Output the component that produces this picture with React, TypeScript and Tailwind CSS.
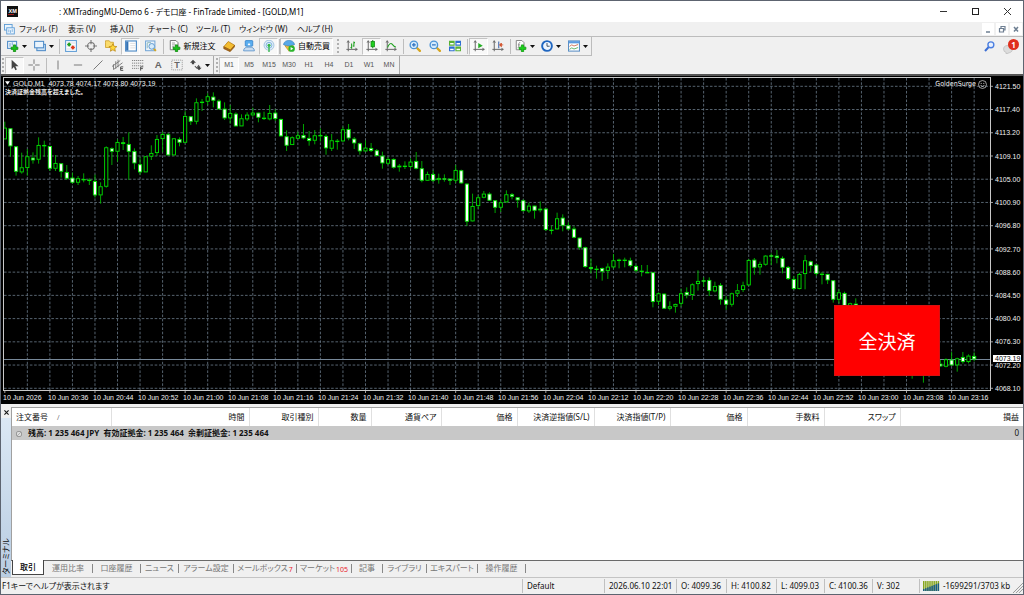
import type { ReactNode } from "react";
import clsx from "clsx";

/* ---------- chart data ---------- */

// [high, body top, body bottom, low, falling]; three units per pixel, measured from y = 75
const CANDLES: number[][] = [
  [140, 158, 193, 193, 0], [160, 160, 214, 245, 1], [214, 214, 290, 302, 1], [233, 277, 292, 296, 0],
  [222, 244, 279, 302, 0], [232, 248, 256, 266, 1], [187, 210, 254, 266, 0], [197, 210, 213, 245, 1],
  [213, 213, 281, 288, 1], [240, 264, 281, 288, 0], [265, 265, 290, 308, 1], [270, 291, 311, 315, 1],
  [293, 308, 323, 326, 1], [303, 310, 323, 330, 0], [295, 312, 315, 322, 1], [310, 314, 318, 330, 1],
  [299, 318, 361, 368, 1], [322, 334, 361, 386, 0], [214, 217, 335, 338, 0], [217, 220, 230, 270, 1],
  [193, 201, 230, 260, 0], [186, 202, 207, 225, 1], [172, 207, 230, 315, 1], [220, 228, 265, 283, 1],
  [247, 268, 292, 300, 1], [243, 244, 292, 292, 0], [211, 234, 245, 255, 0], [180, 192, 234, 243, 0],
  [170, 177, 192, 232, 0], [174, 178, 241, 242, 1], [190, 190, 241, 241, 0], [187, 192, 203, 214, 1],
  [108, 123, 203, 205, 0], [123, 124, 140, 150, 1], [70, 82, 140, 148, 0], [72, 80, 84, 108, 1],
  [55, 64, 80, 90, 0], [52, 65, 77, 97, 1], [73, 77, 103, 103, 1], [82, 101, 130, 135, 1],
  [90, 114, 130, 145, 0], [112, 116, 154, 155, 1], [118, 130, 154, 154, 0], [112, 119, 133, 138, 0],
  [98, 113, 121, 125, 0], [112, 113, 128, 142, 1], [110, 128, 132, 135, 1], [90, 114, 133, 136, 0],
  [103, 113, 132, 138, 1], [131, 132, 184, 185, 1], [166, 184, 212, 228, 1], [184, 187, 210, 210, 0],
  [170, 181, 191, 193, 0], [147, 180, 190, 193, 1], [168, 189, 198, 212, 1], [165, 181, 197, 208, 0],
  [160, 180, 184, 200, 1], [178, 183, 220, 239, 1], [177, 196, 221, 228, 0], [192, 197, 201, 224, 1],
  [155, 163, 199, 201, 0], [147, 162, 190, 196, 1], [186, 191, 205, 222, 1], [203, 205, 229, 239, 1],
  [196, 218, 229, 230, 0], [204, 219, 228, 231, 1], [222, 226, 243, 244, 1], [230, 242, 265, 281, 1],
  [246, 252, 266, 270, 0], [250, 252, 278, 281, 1], [267, 272, 277, 290, 0], [259, 272, 275, 282, 1],
  [250, 260, 276, 280, 0], [231, 258, 281, 283, 1], [258, 280, 317, 322, 1], [290, 297, 317, 318, 0],
  [286, 297, 317, 321, 1], [296, 309, 315, 326, 0], [298, 310, 313, 320, 1], [310, 311, 317, 330, 1],
  [270, 285, 317, 324, 0], [284, 286, 325, 327, 1], [324, 326, 440, 453, 1], [356, 393, 439, 440, 0],
  [361, 367, 393, 402, 0], [348, 356, 368, 370, 0], [352, 356, 377, 378, 1], [375, 376, 398, 414, 1],
  [375, 382, 398, 411, 0], [346, 358, 382, 383, 0], [354, 358, 365, 373, 1], [366, 367, 376, 398, 1],
  [373, 376, 408, 410, 1], [383, 392, 409, 414, 0], [391, 392, 407, 431, 1], [379, 401, 406, 412, 0],
  [399, 401, 465, 468, 1], [452, 464, 467, 478, 1], [413, 430, 463, 464, 0], [418, 428, 452, 469, 1],
  [442, 451, 463, 466, 1], [454, 461, 488, 490, 1], [487, 488, 518, 525, 1], [515, 517, 576, 578, 1],
  [551, 576, 582, 595, 1], [572, 581, 584, 611, 1], [578, 579, 590, 617, 1], [565, 575, 588, 612, 0],
  [537, 556, 577, 581, 0], [551, 554, 557, 580, 1], [548, 554, 557, 577, 1], [548, 556, 573, 577, 1],
  [569, 573, 587, 593, 1], [570, 587, 590, 604, 1], [570, 591, 593, 594, 1], [591, 592, 681, 697, 1],
  [652, 655, 680, 690, 0], [655, 656, 701, 702, 1], [679, 694, 701, 706, 0], [686, 687, 695, 713, 0],
  [641, 655, 686, 695, 0], [637, 651, 661, 670, 1], [625, 628, 660, 675, 0], [586, 618, 627, 647, 0],
  [607, 616, 619, 635, 1], [607, 615, 648, 663, 1], [620, 633, 649, 652, 0], [624, 630, 674, 689, 1],
  [663, 674, 689, 705, 1], [653, 655, 689, 695, 0], [627, 646, 656, 666, 0], [620, 631, 645, 651, 0],
  [552, 555, 631, 632, 0], [549, 554, 578, 599, 1], [560, 567, 577, 599, 0], [540, 542, 569, 572, 0],
  [535, 541, 544, 570, 1], [525, 542, 549, 565, 1], [544, 549, 578, 595, 1], [573, 576, 612, 615, 1],
  [603, 612, 642, 644, 1], [593, 597, 642, 643, 0], [540, 556, 597, 643, 0], [557, 559, 573, 591, 1],
  [567, 569, 597, 603, 1], [591, 596, 599, 628, 1], [596, 597, 616, 627, 1], [615, 616, 674, 683, 1],
  [643, 652, 674, 685, 0], [650, 654, 700, 705, 1], [683, 685, 697, 700, 0], [670, 686, 700, 710, 1],
  [690, 700, 730, 740, 1], [720, 730, 760, 770, 1], [745, 760, 780, 790, 1], [760, 770, 780, 795, 0],
  [765, 770, 800, 810, 1], [795, 800, 830, 840, 1], [810, 815, 830, 845, 0], [812, 815, 850, 860, 1],
  [840, 850, 870, 880, 1], [860, 870, 890, 911, 1], [865, 875, 890, 900, 0], [870, 875, 895, 923, 1],
  [860, 870, 895, 900, 0], [855, 862, 870, 890, 0], [855, 866, 874, 876, 1], [850, 853, 875, 877, 0],
  [831, 854, 871, 873, 1], [848, 850, 871, 890, 0], [831, 846, 861, 866, 1], [838, 842, 861, 865, 0],
  [832, 843, 853, 859, 1],
];

const STEP = 5.63;
const FIRST = 4.8;
const toY = (units: number) => 75 + units / 3;

const PRICES = [
  "4121.50", "4117.40", "4113.20", "4109.10", "4105.00", "4100.90", "4096.80",
  "4092.70", "4088.60", "4084.50", "4080.40", "4076.30", "4072.20", "4068.10",
];

const TIMES = [
  "2026", "20:36", "20:44", "20:52", "21:00", "21:08", "21:16", "21:24", "21:32", "21:40", "21:48",
  "21:56", "22:04", "22:12", "22:20", "22:28", "22:36", "22:44", "22:52", "23:00", "23:08", "23:16",
];

function Plot() {
  return (
    <svg viewBox="3 76 989 318" preserveAspectRatio="none" className="block h-[318px] w-full" role="img" aria-label="GOLD,M1">
      <g stroke="#6c7c8c" strokeWidth="0.8" strokeDasharray="2.6 1.7">
        {PRICES.map((p, k) => (
          <line key={p} x1="4" x2="989" y1={86.3 + 23.23 * k} y2={86.3 + 23.23 * k} />
        ))}
        {Array.from({ length: 43 }, (_, k) => {
          const x = FIRST + STEP * 4 * (k + 1);
          return <line key={k} x1={x} x2={x} y1="78" y2="390" />;
        })}
      </g>
      <line x1="4" x2="990" y1="359.5" y2="359.5" stroke="#778899" />
      {CANDLES.map(([high, top, bottom, low, falling], i) => {
        const x = FIRST + STEP * i;
        const y = toY(top) + 0.4;
        const h = Math.max(toY(bottom) - toY(top) - 0.8, 0.5);
        return (
          <g key={i} stroke="#00e400" strokeWidth="0.9">
            <line x1={x} x2={x} y1={toY(high)} y2={toY(top)} stroke="#00b800" />
            <line x1={x} x2={x} y1={toY(bottom)} y2={toY(low)} stroke="#00b800" />
            <rect x={x - 1.6} y={y} width="3.2" height={h} fill={falling ? "#ffffff" : "#000000"} />
          </g>
        );
      })}
      <path d="M3.5 391 V77.5 H989.5 V390.5 H3.5" fill="none" stroke="#c8c8c8" />
      <g stroke="#c8c8c8" strokeWidth="0.8">
        {PRICES.map((p, k) => (
          <line key={p} x1="990" x2="992" y1={86.3 + 23.23 * k} y2={86.3 + 23.23 * k} />
        ))}
        {TIMES.map((t, k) => (
          <line key={t} x1={FIRST + STEP * 8 * k} x2={FIRST + STEP * 8 * k} y1="391" y2="393" />
        ))}
      </g>
    </svg>
  );
}

function Chart() {
  return (
    <section className="relative flex h-[330px] shrink-0 border-t-2 border-[#555] bg-black pl-[2px] font-['Liberation_Sans',sans-serif] text-[7px] leading-[7px] text-[#f0f0f0]">
      <div className="min-w-0 flex-1">
        <Plot />
        <div className="grid grid-cols-22">
          {TIMES.map((t) => (
            <span key={t} className="whitespace-nowrap">10 Jun {t}</span>
          ))}
        </div>
      </div>
      <div className="relative flex w-[30px] flex-col justify-between pt-[7px] pb-[12px] pl-[2px]">
        {PRICES.map((p) => (
          <span key={p}>{p}</span>
        ))}
        <span className="absolute top-[279px] left-0 w-[28px] bg-white pl-[2px] text-black">4073.19</span>
      </div>
      <div className="absolute top-[4px] left-[4px]">
        <p className="whitespace-pre"><svg viewBox="0 0 6 4" className="mr-[3px] inline-block h-[4px] w-[5px] align-[1px]"><path d="M0 0h6L3 4z" fill="#fff" /></svg>GOLD,M1  4073.78 4074.17 4073.80 4073.19</p>
        <p className="mt-px font-['Noto_Sans_CJK_JP',sans-serif] text-[6px] leading-[8px] font-bold">決済証拠金残高を超えました。</p>
      </div>
      <div className="absolute top-[4px] right-[36px] flex items-center gap-[2px] font-['DejaVu_Sans_Condensed','DejaVu_Sans',sans-serif]">
        GoldenSurge
        <svg viewBox="0 0 10 10" className="h-[9px] w-[9px]" fill="none" stroke="#ddd">
          <circle cx="5" cy="5" r="4.4" strokeWidth="0.8" />
          <path d="M3 3.8h1.2M5.8 3.8H7M2.8 6q2.2 2.4 4.4 0" strokeWidth="0.9" />
        </svg>
      </div>
      <button className="absolute top-[229px] right-[83px] h-[71px] w-[106px] border border-[#d81010] bg-[#ff0000] font-['Noto_Sans_CJK_JP',sans-serif] text-[19px] leading-[19px] text-white">
        全決済
      </button>
    </section>
  );
}

/* ---------- icons ---------- */

const Svg = ({ children, className }: { children: ReactNode; className?: string }) => (
  <svg viewBox="0 0 16 16" className={clsx("shrink-0", className ?? "h-[12px] w-[12px]")} fill="none" aria-hidden="true">
    {children}
  </svg>
);

const PLUS = "M8.5 6.5h3v3h3v3h-3v3h-3v-3h-3v-3h3z";
const Axes = () => <path d="M3 1v14M0.5 12.5H15M1.5 3.5 3 1l1.5 2.5M12.5 11l2.5 1.5-2.5 1.5" stroke="#666" strokeWidth="1.3" />;
const Lens = ({ plus }: { plus?: boolean }) => (
  <>
    <path d="m10 10 4.5 4.5" stroke="#d6a520" strokeWidth="3" strokeLinecap="round" />
    <circle cx="6.5" cy="6.5" r="5" fill="#d5ebfb" stroke="#4b93d6" strokeWidth="1.8" />
    <path d={plus ? "M6.5 4v5M4 6.5h5" : "M4 6.5h5"} stroke="#2a6fc0" strokeWidth="1.6" />
  </>
);

const icons = {
  newChart: (
    <>
      <rect x="0.8" y="1.8" width="12" height="9.4" fill="#eaf4fd" stroke="#4f8cc8" strokeWidth="1.4" />
      <path d="M4 4v5M7 3v4" stroke="#4f8cc8" />
      <path d={PLUS} fill="#19c219" stroke="#0d850d" />
    </>
  ),
  profiles: (
    <>
      <rect x="3.8" y="5.8" width="11.4" height="8.4" fill="#cfe3f5" stroke="#4f8cc8" strokeWidth="1.4" />
      <rect x="0.8" y="1.8" width="12" height="8.6" fill="#eaf4fd" stroke="#4f8cc8" strokeWidth="1.4" />
    </>
  ),
  market: (
    <>
      <rect x="0.8" y="0.8" width="14.4" height="14.4" fill="#fff" stroke="#5b9bd5" strokeWidth="1.4" />
      <path d="M2 4h12M2 8h12M2 12h12" stroke="#ccd" />
      <path d="m5.5 3 3 3-3 3-3-3z" fill="#1fa01f" />
      <path d="m10.5 7 3 3-3 3-3-3z" fill="#e03818" />
    </>
  ),
  crosshair: (
    <>
      <circle cx="8" cy="8" r="4.6" stroke="#777" strokeWidth="1.5" />
      <path d="M8 0v5.5M8 10.5V16M0 8h5.5M10.5 8H16" stroke="#777" strokeWidth="1.5" />
    </>
  ),
  navigator: (
    <>
      <path d="M0.7 3V1h5l1.5 2h4v7H0.7z" fill="#fbdc6c" stroke="#c99a20" />
      <path d="m10.500 5 1.600 3.400 3.700.4-2.800 2.500.8 3.700-3.300-1.900L7.200 15l.8-3.700L5.200 8.800l3.700-.4z" fill="#ffd83c" stroke="#b98512" />
    </>
  ),
  terminal: (
    <>
      <rect x="0.8" y="1.3" width="14.4" height="13.4" fill="#fff" stroke="#4f8cc8" strokeWidth="1.5" />
      <path d="M3 2v12" stroke="#3573b5" strokeWidth="3" />
      <path d="M7 4.5h7M7 7.5h7M7 10.5h7" stroke="#d5d5d5" />
    </>
  ),
  tester: (
    <>
      <rect x="0.8" y="1.3" width="12.4" height="13" fill="#edf4fb" stroke="#6ba1d4" strokeWidth="1.3" />
      <path d="M3 4v7M3 3.5h5" stroke="#7aa" />
      <path d="m11.5 11.5 3 3" stroke="#d6a520" strokeWidth="2.5" />
      <circle cx="9" cy="8.5" r="3.8" fill="#d5ebfb" stroke="#5f98d0" strokeWidth="1.3" />
    </>
  ),
  order: (
    <>
      <path d="M1.7.7h7.5L12 3.5V13H1.7z" fill="#fff" stroke="#777" strokeWidth="1.3" />
      <path d="M4 4h4M4 6.5h5M4 9h3" stroke="#888" />
      <path d={PLUS} fill="#19c219" stroke="#0d850d" />
    </>
  ),
  book: (
    <>
      <path d="m1 9 6-7 8.5 5-5.5 6.5z" fill="#f4bd32" stroke="#b47a10" />
      <path d="M1 9v2.5l8.5 4 6-6.5V7L10 13.5z" fill="#a8681a" stroke="#8a520c" strokeWidth="0.8" />
    </>
  ),
  person: (
    <>
      <rect x="3" y="0.8" width="10" height="7.4" rx="1" fill="#5aaef0" stroke="#2d7ec8" />
      <path d="M6 7l2-3.500L10 7" fill="#fff" />
      <path d="M0.8 14.5c0-4 2.7-5 7.2-5s7.2 1 7.2 5z" fill="#c9dcf0" stroke="#4f8cc8" />
    </>
  ),
  signal: (
    <>
      <circle cx="8" cy="7" r="6.6" fill="#e4f0fa" stroke="#a9c8e2" strokeWidth="1.4" />
      <circle cx="8" cy="7" r="3.9" stroke="#7fb4e0" strokeWidth="1.3" />
      <circle cx="8" cy="7" r="2" fill="#34b54a" />
      <path d="M8 7v9" stroke="#34b54a" strokeWidth="1.8" />
    </>
  ),
  auto: (
    <>
      <path d="M0.5 6c1-4 4-5.500 7.500-5.500S14.500 2 15.500 6c-3 2.500-12 2.500-15 0z" fill="#58a9e8" stroke="#2b78b8" strokeWidth="0.8" />
      <path d="M2.5 7.5 8 15l5.500-7.500c-3 1.500-8 1.500-11 0z" fill="#f1c13a" stroke="#b98512" strokeWidth="0.8" />
      <circle cx="11.5" cy="11.5" r="4.3" fill="#2bb52b" />
      <path d="m10.2 9.2 3.6 2.3-3.6 2.3z" fill="#fff" />
    </>
  ),
  bars: (
    <>
      <Axes />
      <path d="M7.5 4.5v7M6 10h1.5M10.5 2v7M10.5 3.5H12M9 8h1.5" stroke="#21a121" strokeWidth="1.4" />
    </>
  ),
  candles: (
    <>
      <Axes />
      <path d="M9 0v11" stroke="#128912" strokeWidth="1.3" />
      <rect x="6.7" y="2" width="4.6" height="7" fill="#1fd01f" stroke="#128912" />
    </>
  ),
  line: (
    <>
      <Axes />
      <path d="M3.5 10C5 5 8 3.5 9.5 5.5S12 9 14.5 9.5" stroke="#21a121" strokeWidth="1.4" />
    </>
  ),
  zoomIn: <Lens plus />,
  zoomOut: <Lens />,
  tile: (
    <>
      <path d="M0 1h7.500v6.500H0zM8.500 8.500H16V15H8.500z" fill="#57b032" />
      <path d="M8.500 1H16v6.500H8.500zM0 8.500h7.500V15H0z" fill="#2e6fd0" />
      <path d="M1.500 4h4.700v2H1.500zM10 4h4.700v2H10zM1.500 11.500h4.700v2H1.500zM10 11.500h4.700v2H10z" fill="#fff" />
    </>
  ),
  scroll: (
    <>
      <Axes />
      <path d="m7 4 6 3.5L7 11z" fill="#25ae25" />
    </>
  ),
  shift: (
    <>
      <Axes />
      <path d="M9 2v9" stroke="#3a66b0" strokeWidth="1.4" />
      <path d="M15 6.5h-3M12.5 4v5L10 6.500z" stroke="#d24a20" fill="#d24a20" />
    </>
  ),
  indicator: (
    <>
      <path d="M1.7.7h7.5L12 3.5V13H1.7z" fill="#fff" stroke="#888" strokeWidth="1.3" />
      <path d="M7 3.5C4.8 3 5.2 5 5 7s-.2 3.500-1.500 3.500M3.800 6.500h3" stroke="#777" />
      <path d={PLUS} fill="#19d219" stroke="#0d950d" />
    </>
  ),
  clock: (
    <>
      <circle cx="8" cy="8" r="6.5" fill="#eef6ff" stroke="#1f66c0" strokeWidth="2.6" />
      <path d="M8 4v4.300h3.500" stroke="#345" strokeWidth="1.2" />
    </>
  ),
  template: (
    <>
      <rect x="0.7" y="1.2" width="14.6" height="13.6" fill="#fff" stroke="#5b8fc4" strokeWidth="1.4" />
      <path d="M1 3h14" stroke="#5b9be0" strokeWidth="3" />
      <path d="m2 8.5 3-2 3 1.5 5.500-2" stroke="#c05030" />
      <path d="m2 12.5 3-2 3 1.5 5.500-2" stroke="#30a040" />
    </>
  ),
  cursor: <path d="M3.500 1v12.500l3-3 2 4.500 2-1-2-4.200h4.200z" fill="#444" />,
  cross: <path d="M8 .5v6M8 9.500v6M.5 8h6M9.500 8h6" stroke="#777" strokeWidth="1.3" />,
  vline: <path d="M8 2v12" stroke="#777" strokeWidth="1.3" />,
  hline: <path d="M2.5 8h11" stroke="#777" strokeWidth="1.3" />,
  trend: <path d="M2 14 14 2" stroke="#777" strokeWidth="1.3" />,
  channel: (
    <>
      <path d="M0 10 11 2M2 14 14 5M5 3v10M8 1v10M2 7v7" stroke="#777" strokeWidth="1.2" />
      <path d="M15 10.500h-3.500v4.700H15M11.500 12.800h3" stroke="#444" strokeWidth="1.2" />
    </>
  ),
  fibo: (
    <>
      <path d="M0 2h15M0 5.500h15M0 9h15M0 12.500h9" stroke="#777" strokeWidth="1.2" strokeDasharray="1.6 1.1" />
      <path d="M15 10.500h-3.500v5M11.500 12.800h3" stroke="#444" strokeWidth="1.2" />
    </>
  ),
  letter: <text x="3.5" y="12.5" fontSize="13" fontWeight="700" fontFamily="Liberation Sans" fill="#666">A</text>,
  label: (
    <>
      <rect x="1" y="1.5" width="14" height="13" stroke="#888" strokeDasharray="1.5 1.2" />
      <text x="4.3" y="12.5" fontSize="12" fontWeight="700" fontFamily="Liberation Sans" fill="#666">T</text>
    </>
  ),
  arrows: (
    <>
      <path d="M4 1 8 5 5.500 5v2h-3V5H0z" fill="#444" />
      <path d="M6.500 9.500 9 12l3-4" stroke="#555" strokeWidth="1.4" />
      <path d="M12 15 8.500 11.500h2v-2h3v2h2z" fill="#444" />
    </>
  ),
};

type IconName = keyof typeof icons;

/* ---------- toolbars ---------- */

interface ToolProps {
  name: IconName;
  label: string;
  width: string;
  pressed?: boolean;
  menu?: boolean;
  text?: string;
}

function Tool({ name, label, width, pressed, menu, text }: ToolProps) {
  return (
    <button
      aria-label={label}
      className={clsx(
        "flex h-[17px] shrink-0 items-center justify-center gap-[3px] whitespace-nowrap text-black",
        width,
        pressed && "border border-[#c4c4c4] border-r-white border-b-white bg-[#f8f8f8]",
      )}
    >
      <Svg>{icons[name]}</Svg>
      {text && <span>{text}</span>}
      {menu && (
        <svg viewBox="0 0 5 3" className="h-[3px] w-[5px]" aria-hidden="true">
          <path d="M0 0h5L2.500 3z" fill="#111" />
        </svg>
      )}
    </button>
  );
}

const Divider = ({ width = "w-[4px]" }: { width?: string }) => (
  <span className={clsx("flex h-[15px] shrink-0 justify-center", width)}>
    <span className="w-px bg-[#bdbdbd]" />
  </span>
);

const Grip = ({ width }: { width: string }) => (
  <span className={clsx("flex h-[14px] shrink-0 justify-center", width)}>
    <span className="border-l-2 border-dotted border-[#b0b0b0]" />
  </span>
);

const FRAMES = ["M1", "M5", "M15", "M30", "H1", "H4", "D1", "W1", "MN"];

function Toolbars() {
  return (
    <div className="shrink-0 bg-[#f0f0f0]">
      <div className="flex h-[19px] items-center">
        <div className="flex h-full items-center border-r border-b border-[#bcbcbc] pl-[3px]">
          <Tool name="newChart" label="新規チャート" width="w-[26px]" menu />
          <Tool name="profiles" label="プロファイル" width="w-[27px]" menu />
          <Divider />
          <Tool name="market" label="気配値" width="w-[20px]" />
          <Tool name="crosshair" label="データウィンドウ" width="w-[20px]" />
          <Tool name="navigator" label="ナビゲーター" width="w-[20px]" />
          <Tool name="terminal" label="ターミナル" width="w-[19px]" pressed />
          <Tool name="tester" label="ストラテジーテスター" width="w-[21px]" />
          <Divider />
          <Tool name="order" label="新規注文" width="w-[54px]" text="新規注文" />
          <Tool name="book" label="メタエディター" width="w-[20px]" />
          <Tool name="person" label="コミュニティ" width="w-[20px]" />
          <Tool name="signal" label="シグナル" width="w-[19px]" pressed />
          <Divider width="w-[2px]" />
          <Tool name="auto" label="自動売買" width="w-[53px]" text="自動売買" pressed />
          <Grip width="w-[9px]" />
          <Tool name="bars" label="バーチャート" width="w-[20px]" />
          <Tool name="candles" label="ローソク足" width="w-[19px]" pressed />
          <Tool name="line" label="ラインチャート" width="w-[20px]" />
          <Divider />
          <Tool name="zoomIn" label="拡大" width="w-[20px]" />
          <Tool name="zoomOut" label="縮小" width="w-[20px]" />
          <Tool name="tile" label="整列" width="w-[20px]" />
          <Divider />
          <Tool name="scroll" label="自動スクロール" width="w-[19px]" pressed />
          <Tool name="shift" label="チャートシフト" width="w-[20px]" />
          <Divider />
          <Tool name="indicator" label="インディケータ" width="w-[26px]" menu />
          <Tool name="clock" label="時間足" width="w-[26px]" menu />
          <Tool name="template" label="テンプレート" width="w-[27px]" menu />
        </div>
        <div className="ml-auto flex items-center gap-[8px] pr-[4px]">
          <button aria-label="検索">
            <Svg className="h-[11px] w-[11px]">
              <path d="m1.5 14.5 5.500-6" stroke="#3c6fd4" strokeWidth="3" />
              <circle cx="10" cy="5.5" r="4.3" fill="#e9f1ff" stroke="#4a7ee0" strokeWidth="2" />
            </Svg>
          </button>
          <button aria-label="通知" className="relative flex h-[15px] w-[16px] items-end">
            <Svg className="h-[10px] w-[10px]">
              <path d="M1 9a7 6 0 1 1 9 5l-5 2v-2.500A6 5 0 0 1 1 9z" fill="#dcdcdc" stroke="#b4b4b4" />
            </Svg>
            <span className="absolute top-0 right-0 h-[11px] w-[11px] rounded-full bg-[#df2f1c] text-center text-[8px] leading-[11px] font-bold text-white">1</span>
          </button>
        </div>
      </div>
      <div className="flex h-[18px] items-center">
        <Grip width="w-[4px]" />
        <div className="flex h-full items-center border-r border-[#a8a8a8]">
          <Tool name="cursor" label="カーソル" width="w-[19px]" pressed />
          <Tool name="cross" label="十字カーソル" width="w-[20px]" />
          <Divider />
          <Tool name="vline" label="垂直線" width="w-[20px]" />
          <Tool name="hline" label="水平線" width="w-[20px]" />
          <Tool name="trend" label="トレンドライン" width="w-[20px]" />
          <Tool name="channel" label="チャネル" width="w-[20px]" />
          <Tool name="fibo" label="フィボナッチ" width="w-[20px]" />
          <Tool name="letter" label="テキスト" width="w-[19px]" />
          <Tool name="label" label="テキストラベル" width="w-[20px]" />
          <Tool name="arrows" label="矢印" width="w-[26px]" menu />
        </div>
        <Grip width="w-[5px]" />
        <div className="flex h-full items-center border-r border-[#a8a8a8] font-['Liberation_Sans',sans-serif] text-[7px] text-[#555]">
          {FRAMES.map((f, i) => (
            <button
              key={f}
              className={clsx("h-[17px] w-[20px] border", i === 0 ? "border-[#c4c4c4] border-r-white border-b-white bg-[#f8f8f8]" : "border-transparent")}
            >
              {f}
            </button>
          ))}
        </div>
      </div>
    </div>
  );
}

/* ---------- title and menu ---------- */

const MENU = [
  { label: "ファイル (F)", width: "w-[49px]" },
  { label: "表示 (V)", width: "w-[42px]" },
  { label: "挿入(I)", width: "w-[38px]" },
  { label: "チャート (C)", width: "w-[48px]" },
  { label: "ツール (T)", width: "w-[43px]" },
  { label: "ウィンドウ (W)", width: "w-[58px]" },
  { label: "ヘルプ (H)", width: "w-[40px]" },
];

function TitleBar() {
  return (
    <header className="flex h-[21px] shrink-0 items-center bg-white pr-[11px] pl-[6px]">
      <svg viewBox="0 0 11 11" className="h-[11px] w-[11px]" aria-hidden="true">
        <rect width="11" height="11" fill="#111" />
        <text x="1.5" y="7" fontSize="5.5" fontWeight="700" fontFamily="Liberation Sans" fill="#fff">XM</text>
        <path d="M1 8.500h6" stroke="#c22" strokeWidth="0.8" />
      </svg>
      <h1 className="ml-[41px] text-black">: XMTradingMU-Demo 6 - デモ口座 - FinTrade Limited - [GOLD,M1]</h1>
      <div className="ml-auto flex gap-[23px]">
        <button aria-label="最小化"><svg viewBox="0 0 9 9" className="h-[9px] w-[9px]"><path d="M1 4.500h7" stroke="#333" /></svg></button>
        <button aria-label="最大化"><svg viewBox="0 0 9 9" className="h-[9px] w-[9px]"><rect x="1.5" y="1.5" width="6" height="6" fill="none" stroke="#222" /></svg></button>
        <button aria-label="閉じる"><svg viewBox="0 0 9 9" className="h-[9px] w-[9px]"><path d="m1 1 7 7M8 1 1 8" stroke="#333" /></svg></button>
      </div>
    </header>
  );
}

function MenuBar() {
  return (
    <nav className="flex h-[15px] shrink-0 items-center border-b border-[#bcbcbc] bg-[#f0f0f0] pr-[1px] pl-[3px]">
      <Svg className="h-[11px] w-[11px]">
        <rect x="0.8" y="0.8" width="11" height="8" fill="#eaf4fd" stroke="#5b9bd5" strokeWidth="1.3" />
        <rect x="4" y="5.5" width="11" height="9" fill="#eaf4fd" stroke="#5b9bd5" strokeWidth="1.3" />
        <path d="M7 8v4M9.500 9v4M12 7.500v4" stroke="#5b9bd5" />
      </Svg>
      <div className="ml-[4px] flex">
        {MENU.map((m) => (
          <button key={m.label} className={clsx("text-left whitespace-nowrap", m.width)}>{m.label}</button>
        ))}
      </div>
      <div className="ml-auto flex gap-[2px]">
        <button aria-label="最小化" className="bg-white p-px"><svg viewBox="0 0 10 10" className="h-[10px] w-[10px]"><path d="M3 8h4" stroke="#6e7f92" strokeWidth="1.5" /></svg></button>
        <button aria-label="元に戻す" className="bg-white p-px"><svg viewBox="0 0 10 10" className="h-[10px] w-[10px]" fill="none"><path d="M4 4V2.500h4v3.500H6.500M2.500 4.500h4V8h-4z" stroke="#6e7f92" strokeWidth="1.2" /></svg></button>
        <button aria-label="閉じる" className="bg-white p-px"><svg viewBox="0 0 10 10" className="h-[10px] w-[10px]"><path d="m3 3 4 4.500M7 3 3 7.500" stroke="#6e7f92" strokeWidth="1.5" /></svg></button>
      </div>
    </nav>
  );
}

/* ---------- terminal ---------- */

const COLUMNS = [
  { label: "時間", width: "w-[138px]" },
  { label: "取引種別", width: "w-[69px]" },
  { label: "数量", width: "w-[53px]" },
  { label: "通貨ペア", width: "w-[70px]" },
  { label: "価格", width: "w-[76px]" },
  { label: "決済逆指値(S/L)", width: "w-[77px]" },
  { label: "決済指値(T/P)", width: "w-[76px]" },
  { label: "価格", width: "w-[77px]" },
  { label: "手数料", width: "w-[77px]" },
  { label: "スワップ", width: "w-[76px]" },
  { label: "損益", width: "w-auto" },
];

const TABS = [
  { label: "運用比率", width: "w-[49px]" },
  { label: "口座履歴", width: "w-[48px]" },
  { label: "ニュース", width: "w-[38px]" },
  { label: "アラーム設定", width: "w-[55px]" },
  { label: "メールボックス", width: "w-[63px]", count: "7" },
  { label: "マーケット", width: "w-[55px]", count: "105" },
  { label: "記事", width: "w-[31px]" },
  { label: "ライブラリ", width: "w-[44px]" },
  { label: "エキスパート", width: "w-[51px]" },
  { label: "操作履歴", width: "w-[48px]" },
];

function Terminal() {
  return (
    <section className="flex flex-1 bg-[#f0f0f0] pt-[3px]">
      <div className="flex w-[10px] shrink-0 flex-col items-center">
        <button aria-label="閉じる" className="flex h-[11px] items-center">
          <svg viewBox="0 0 6 6" className="h-[5px] w-[5px]"><path d="m.5.5 5 5m0-5-5 5" stroke="#111" strokeWidth="1.3" /></svg>
        </button>
        <div className="flex w-full flex-1 flex-col items-center justify-end bg-linear-to-b from-[#dbe8f5] to-[#b9cde2] pb-[2px]">
          <span className="rotate-180 text-[8px] leading-[10px] whitespace-nowrap [text-orientation:sideways] [writing-mode:vertical-rl]">ターミナル</span>
        </div>
      </div>
      <div className="flex min-w-0 flex-1 flex-col">
        <div className="flex-1 border-t border-l border-[#a0a0a0] bg-white">
          <table className="w-full table-fixed border-collapse">
            <thead>
              <tr className="h-[18px]">
                <th className="w-[99px] border-r border-[#e0e0e0] pl-[4px] text-left font-normal">
                  注文番号<span className="ml-[9px] text-[7px] text-[#777]">/</span>
                </th>
                {COLUMNS.map((c, i) => (
                  <th key={i} className={clsx("border-[#e0e0e0] pr-[4px] text-right font-normal whitespace-nowrap [&:not(:last-child)]:border-r", c.width)}>
                    {c.label}
                  </th>
                ))}
              </tr>
            </thead>
            <tbody>
              <tr className="h-[14px] bg-[#c8c8c8]">
                <td colSpan={11} className="pl-[4px] font-bold whitespace-pre">
                  <svg viewBox="0 0 6 6" className="mr-[6px] inline-block h-[6px] w-[6px]" aria-hidden="true">
                    <rect x="0.5" y="0.5" width="5" height="5" rx="1.5" fill="#ddd" stroke="#999" />
                    <path d="m1 5 4-4" stroke="#999" strokeWidth="0.7" />
                  </svg>
                  残高: 1 235 464 JPY  有効証拠金: 1 235 464  余剰証拠金: 1 235 464
                </td>
                <td className="pr-[4px] text-right">0</td>
              </tr>
            </tbody>
          </table>
        </div>
        <div className="flex h-[17px] shrink-0 border-t border-[#6a6a6a] pl-px text-[#777]">
          <button className="-mt-px h-[15px] w-[32px] border border-t-0 border-[#444] bg-white font-medium text-black">取引</button>
          {TABS.map((t) => (
            <span key={t.label} className={clsx("flex h-[14px] items-center", t.width)}>
              <button className="flex flex-1 items-center justify-center whitespace-nowrap">
                {t.label}
                {t.count && <sub className="ml-px text-[7px] leading-[7px] text-[#e8202c]">{t.count}</sub>}
              </button>
              <span className="h-[9px] w-px bg-[#888]" />
            </span>
          ))}
        </div>
      </div>
    </section>
  );
}

const STATUS = [
  { label: "Default", width: "w-[82px]" },
  { label: "2026.06.10 22:01", width: "w-[72px]" },
  { label: "O: 4099.36", width: "w-[50px]" },
  { label: "H: 4100.82", width: "w-[50px]" },
  { label: "L: 4099.03", width: "w-[48px]" },
  { label: "C: 4100.36", width: "w-[48px]" },
  { label: "V: 302", width: "w-[47px]" },
];

function StatusBar() {
  return (
    <footer className="flex h-[17px] shrink-0 items-center border-t border-[#c4c4c4] bg-[#f0f0f0]">
      <span className="min-w-0 flex-1 pl-px">F1キーでヘルプが表示されます</span>
      {STATUS.map((s) => (
        <span key={s.label} className={clsx("flex h-[14px] items-center border-l border-[#c0c0c0] pl-[4px] whitespace-nowrap", s.width)}>
          {s.label}
        </span>
      ))}
      <span className="flex h-[14px] w-[104px] items-center gap-[3px] border-l border-[#c0c0c0] pl-[3px] whitespace-nowrap">
        <svg viewBox="0 0 17 10" className="h-[10px] w-[17px]" aria-hidden="true">
          {[0, 1, 2, 3, 4, 5, 6, 7].map((i) => (
            <g key={i}>
              <rect x={i * 2.1} y="0" width="1.5" height="10" fill="#86a61e" />
              <rect x={i * 2.1} y={8 - i * 0.8} width="1.5" height={2 + i * 0.8} fill="#175a86" />
            </g>
          ))}
        </svg>
        -1699291/3703 kb
        <svg viewBox="0 0 10 10" className="mt-auto ml-auto h-[10px] w-[10px]" aria-hidden="true">
          <path d="M0 10 10 0M3 10l7-7M6 10l4-4" stroke="#999" />
        </svg>
      </span>
    </footer>
  );
}

export default function App() {
  return (
    <div className="flex min-h-screen w-full flex-col border border-[#5d6470] bg-[#f0f0f0] font-['Noto_Sans','Noto_Sans_CJK_JP',sans-serif] text-[8px] leading-[12px] text-[#111] [font-feature-settings:'palt']">
      <TitleBar />
      <MenuBar />
      <Toolbars />
      <Chart />
      <Terminal />
      <StatusBar />
    </div>
  );
}
